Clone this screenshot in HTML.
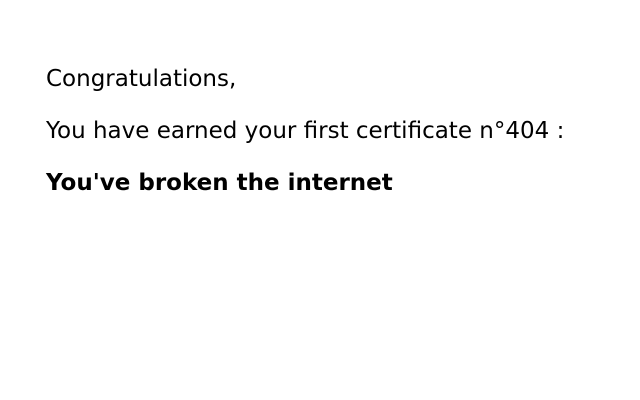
<!DOCTYPE html>
<html><head><meta charset="utf-8"><style>
html,body{margin:0;padding:0;background:#fff;width:640px;height:400px;overflow:hidden}
div{position:absolute;left:46px;font-family:"DejaVu Sans",sans-serif;font-size:23px;line-height:26px;color:#000;white-space:nowrap}
</style></head><body>
<div style="top:66px">Congratulations,</div>
<div style="top:118px">You have earned your first certificate n°404 :</div>
<div style="top:170px;font-weight:bold">You've broken the internet</div>
</body></html>
